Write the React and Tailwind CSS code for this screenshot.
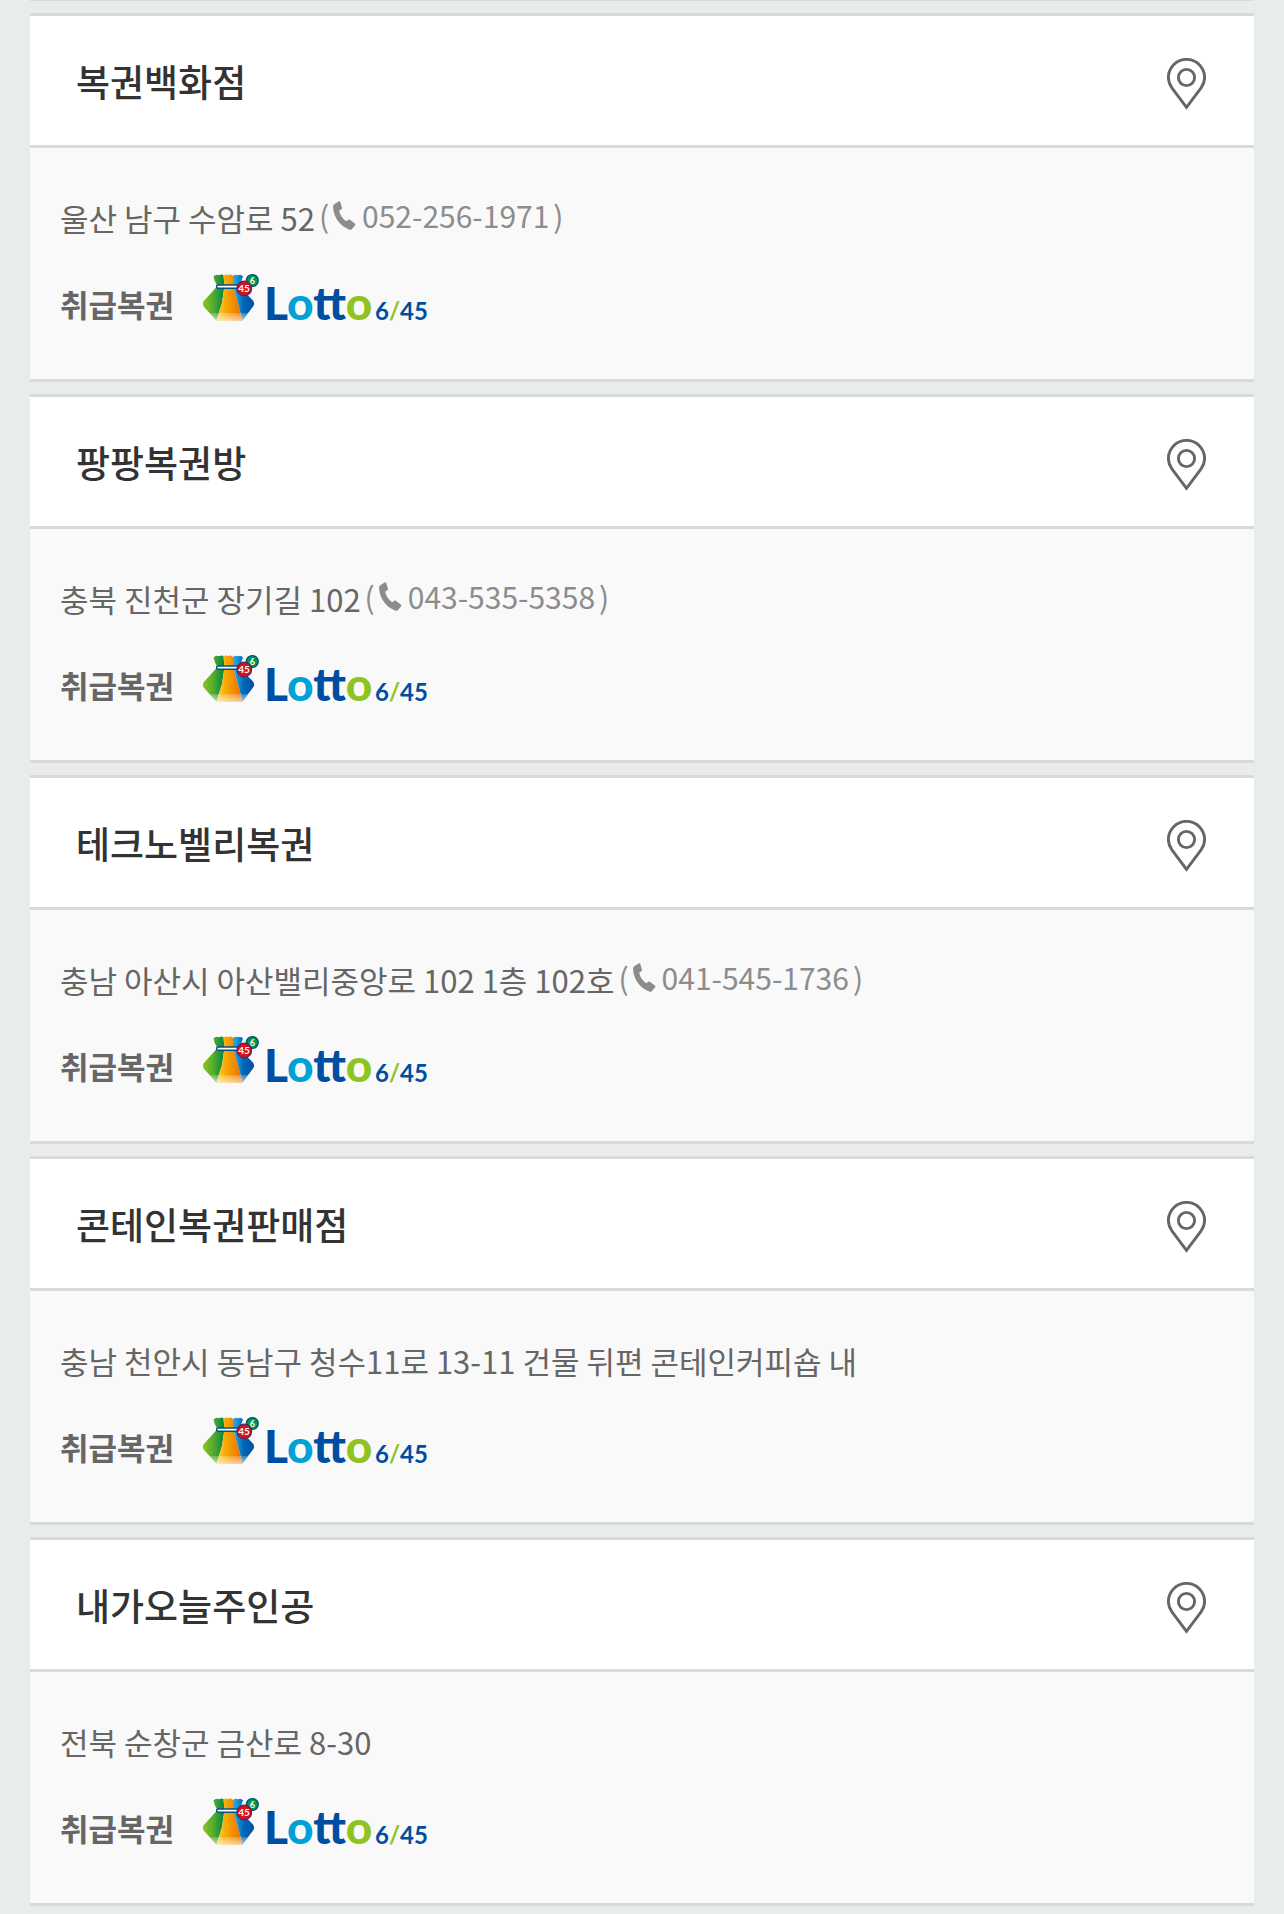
import React from "react";

const stores = [
  { name: "복권백화점", address: "울산 남구 수암로 52", phone: "052-256-1971" },
  { name: "팡팡복권방", address: "충북 진천군 장기길 102", phone: "043-535-5358" },
  { name: "테크노벨리복권", address: "충남 아산시 아산밸리중앙로 102 1층 102호", phone: "041-545-1736" },
  { name: "콘테인복권판매점", address: "충남 천안시 동남구 청수11로 13-11 건물 뒤편 콘테인커피숍 내" },
  { name: "내가오늘주인공", address: "전북 순창군 금산로 8-30" },
];

function PinIcon() {
  return (
    <svg width="39" height="52" viewBox="0 0 39 52" fill="none" stroke="#666" strokeWidth="2.9" aria-hidden="true">
      <path d="M19.5 49.3 4.9 29.8C2.5 26.6 1.4 23.2 1.4 19.5a18.1 18.1 0 0 1 36.2 0c0 3.7-1.1 7.1-3.5 10.3Z" />
      <circle cx="19.5" cy="19.5" r="8.1" />
    </svg>
  );
}

function PhoneIcon() {
  return (
    <svg width="23" height="29" viewBox="0 0 23 29" fill="#8c8c8c" aria-hidden="true">
      <path d="M1.2 3.2 5.6.4C6.4-.1 7 .2 7.3 1l1.6 5.4c.3.9 0 1.5-.8 2L6.2 9.6c.7 4.4 3.2 8.100 6.900 10.600l2-1.300c.8-.5 1.400-.5 2.100.1l4.600 3.500c.7.5.8 1.200.2 1.900l-3 3.500c-.8.9-1.700 1-2.900.6C7.800 25.600.6 17 .1 6.600 0 5.100.2 3.900 1.200 3.200Z" />
    </svg>
  );
}

function LottoLogo({ id }) {
  return (
    <svg width="230" height="62" viewBox="0 0 230 62" role="img" aria-label="Lotto 6/45">
      <defs>
        <linearGradient id={`green-${id}`} x1="0" y1="0" x2="1" y2="0">
          <stop offset="0" stopColor="#8fc31f" />
          <stop offset="0.45" stopColor="#5aae2c" />
          <stop offset="1" stopColor="#00863f" />
        </linearGradient>
        <linearGradient id={`orange-${id}`} x1="0" y1="0" x2="1" y2="0">
          <stop offset="0" stopColor="#ffd23c" />
          <stop offset="0.4" stopColor="#f7a500" />
          <stop offset="1" stopColor="#e96c00" />
        </linearGradient>
        <linearGradient id={`blue-${id}`} x1="0" y1="0" x2="1" y2="0">
          <stop offset="0" stopColor="#2bb0ea" />
          <stop offset="0.5" stopColor="#0068b7" />
          <stop offset="1" stopColor="#004ea2" />
        </linearGradient>
        <linearGradient id={`shine-${id}`} x1="0" y1="0" x2="0" y2="1">
          <stop offset="0" stopColor="#fff" stopOpacity="0.2" />
          <stop offset="1" stopColor="#fff" stopOpacity="0.6" />
        </linearGradient>
      </defs>
      <path d="M11.500 3.500Q14 .8 17 2.300 19.500 1 21.500 2L22.500 13 20 30 14.500 47.500 1.600 33.500Q.2 31 1.400 28.500L15.500 13Q12 8 11.500 3.500Z" fill={`url(#green-${id})`} />
      <path d="M21.500 3Q23.500.8 26.300 2 29 .8 31 3V13L36 30 40.500 47.500H14.500L20 30 22.500 13Z" fill={`url(#orange-${id})`} />
      <path d="M31 3Q33.500.8 36 2.200 39 .8 41 3.500 39.500 8 37 13L51.400 28Q52.800 30.500 51.400 33L40.500 47.500 36 30 31 13Z" fill={`url(#blue-${id})`} />
      <path d="M8 40H46.200L40.500 47.500H14.500Z" fill={`url(#shine-${id})`} />
      <rect x="14.600" y="12" width="24" height="3.200" rx="1.600" fill="#fff" stroke="#00508c" strokeWidth="1.500" />
      <circle cx="50.300" cy="7.500" r="5.900" fill="#009944" stroke="#004f80" strokeWidth="1.400" />
      <circle cx="42.300" cy="15.500" r="7.300" fill="#d7101c" stroke="#5c2450" strokeWidth="1.200" />
      <text x="50.300" y="11" textAnchor="middle" className="font-['Lato'] text-[9px] font-bold" fill="#fff">6</text>
      <text x="42" y="19" textAnchor="middle" className="font-['Lato'] text-[10px] font-bold" fill="#fff">45</text>
      <text x="62" y="47" className="font-['Lato'] text-[46px] font-black" fill="#004ea2">
        L<tspan fill="#00a0d8">o</tspan>tt<tspan fill="#8fc31f">o</tspan>
      </text>
      <text x="173" y="47" className="font-['Lato'] text-[24px] font-bold" fill="#004ea2">
        6<tspan fill="#8fc31f">/</tspan>45
      </text>
    </svg>
  );
}

function StoreCard({ store, id }) {
  return (
    <article className="border-y-3 border-[#dadada] bg-[#f9f9f9]">
      <header className="flex h-[132px] items-center justify-between border-b-3 border-[#dadada] bg-white pr-12 pl-[46px]">
        <h2 className="text-[37px] leading-[54px] font-medium text-[#333]">{store.name}</h2>
        <button type="button" aria-label={`${store.name} 위치 보기`} className="cursor-pointer pt-1.5">
          <PinIcon />
        </button>
      </header>
      <div className="flex flex-col gap-[34px] px-[30px] pt-[46px] pb-[47px]">
        <p className="flex h-12 items-center gap-1 text-[31px] leading-[48px] text-[#666]">
          <span>{store.address}</span>
          {store.phone && (
            <span className="flex items-center gap-1 pb-1.5 text-[30px] text-[#8c8c8c]">
              (
              <a href={`tel:${store.phone}`} className="flex items-center gap-1.5">
                <PhoneIcon />
                {store.phone}
              </a>
              )
            </span>
          )}
        </p>
        <div className="flex h-14 items-center gap-7">
          <strong className="text-[31px] leading-[48px] font-bold text-[#666]">취급복권</strong>
          <LottoLogo id={id} />
        </div>
      </div>
    </article>
  );
}

export default function App() {
  return (
    <div className="min-h-screen bg-[#e8eced] px-[30px] font-['Noto_Sans_CJK_KR',sans-serif]">
      <main className="flex flex-col gap-3 border-t border-[#dadada] pt-3">
        {stores.map((store, index) => (
          <StoreCard key={store.name} store={store} id={index} />
        ))}
      </main>
    </div>
  );
}
